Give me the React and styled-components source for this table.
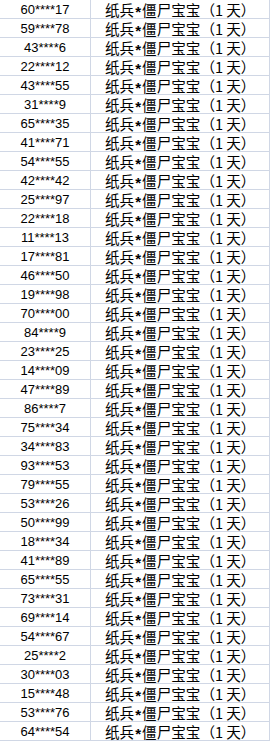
import { Fragment } from "react";
import styled, { createGlobalStyle } from "styled-components";

const GlobalStyle = createGlobalStyle`
  * {
    margin: 0;
    padding: 0;
    box-sizing: border-box;
  }
  body {
    background: #ffffff;
  }
`;

const Sheet = styled.div`
  display: grid;
  grid-template-columns: 91px 179px;
  width: 270px;
`;

const Cell = styled.div`
  height: 19px;
  border-right: 1px solid #d0d7e5;
  border-bottom: 1px solid #d0d7e5;
  display: flex;
  align-items: center;
  justify-content: ${(p) => (p.$cjk ? "flex-start" : "center")};
  white-space: nowrap;
  color: #000;
  font-family: ${(p) =>
    p.$cjk
      ? '"Noto Sans CJK SC", "Liberation Sans", sans-serif'
      : '"Liberation Sans", sans-serif'};
  font-size: ${(p) => (p.$cjk ? "14.6px" : "13px")};
  line-height: 18px;
  padding-top: 1px;
  padding-left: ${(p) => (p.$cjk ? "14px" : "0")};
`;

const Paren = styled.span`
  display: inline-block;
  width: 14.6px;
  text-align: center;
`;

const Star = styled.span`
  font-family: "Liberation Sans", sans-serif;
  font-weight: bold;
  font-size: 15px;
  padding: 5px 1px 0;
`;

const Days = styled.span`
  margin-right: 3px;
`;

const ids = [
  "60****17", "59****78", "43****6", "22****12", "43****55", "31****9",
  "65****35", "41****71", "54****55", "42****42", "25****97", "22****18",
  "11****13", "17****81", "46****50", "19****98", "70****00", "84****9",
  "23****25", "14****09", "47****89", "86****7", "75****34", "34****83",
  "93****53", "79****55", "53****26", "50****99", "18****34", "41****89",
  "65****55", "73****31", "69****14", "54****67", "25****2", "30****03",
  "15****48", "53****76", "64****54",
];

const App = () => {
  return (
    <>
      <GlobalStyle />
      <Sheet>
        {ids.map((id, i) => (
          <Fragment key={i}>
            <Cell>{id}</Cell>
            <Cell $cjk>
              纸兵<Star>*</Star>僵尸宝宝<Paren>（</Paren>
              <Days>1</Days>天<Paren>）</Paren>
            </Cell>
          </Fragment>
        ))}
      </Sheet>
    </>
  );
};

export default App;
